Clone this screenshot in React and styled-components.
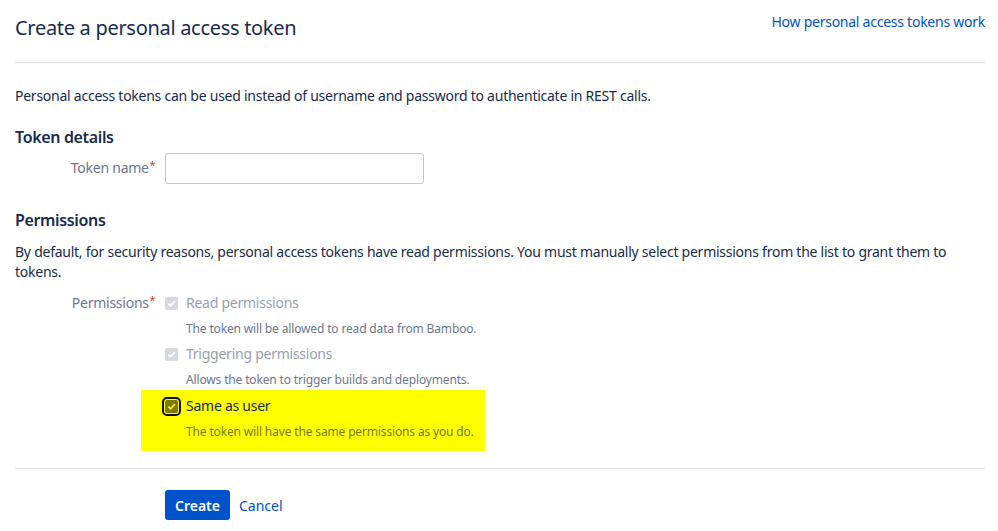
import React from "react";
import styled, { createGlobalStyle } from "styled-components";

const GlobalStyle = createGlobalStyle`
  html, body {
    margin: 0;
    padding: 0;
    background: #fff;
  }
  body {
    font-family: "Segoe UI", "Noto Sans", sans-serif;
    font-size: 14px;
    letter-spacing: -0.25px;
    color: #172b4d;
  }
`;

const Page = styled.div`
  padding: 0 13px 0 15px;
  width: 970px;
`;

const Header = styled.div`
  display: flex;
  justify-content: space-between;
  align-items: flex-start;
  padding-top: 12px;
  height: 50px;
  border-bottom: 1px solid #dfe1e6;
`;

const Title = styled.h1`
  margin: 0;
  font-size: 20px;
  font-weight: 400;
  line-height: 32px;
  letter-spacing: -0.3px;
  color: #172b4d;
`;

const Link = styled.a`
  color: #0052cc;
  text-decoration: none;
  font-size: 14px;
  line-height: 20px;
`;

const Text = styled.p`
  margin: ${(p) => p.$margin || "0"};
  font-size: 14px;
  line-height: 20px;
  color: #172b4d;
`;

const SectionTitle = styled.h2`
  margin: ${(p) => p.$margin || "0"};
  font-size: 16px;
  font-weight: 600;
  line-height: 22px;
  letter-spacing: -0.35px;
  color: #172b4d;
`;

const FieldRow = styled.div`
  display: grid;
  grid-template-columns: 140px 1fr;
  column-gap: 10px;
  margin: ${(p) => p.$margin || "0"};
`;

const Label = styled.label`
  text-align: right;
  color: #6b778c;
  font-size: 14px;
  line-height: 20px;
  padding-top: ${(p) => p.$top || "0"};
`;

const Required = styled.span`
  color: #de350b;
  font-size: 10px;
  vertical-align: top;
  position: relative;
  top: -3px;
  margin-left: 1px;
`;

const Input = styled.input`
  box-sizing: border-box;
  width: 259px;
  height: 31px;
  border: 1px solid #c1c7d0;
  border-radius: 3px;
  font: inherit;
  padding: 0 8px;
`;

const Options = styled.div`
  display: flex;
  flex-direction: column;
`;

const Option = styled.div`
  display: grid;
  grid-template-columns: 13px 1fr;
  column-gap: 8px;
  align-items: center;
  padding: ${(p) => (p.$highlight ? "6px 0 11px 24px" : "0")};
  margin: ${(p) => (p.$highlight ? "-5px 0 0 -24px" : "0 0 7px")};
  width: ${(p) => (p.$highlight ? "320px" : "auto")};
  background: ${(p) => (p.$highlight ? "#ffff00" : "transparent")};
`;

const OptionLabel = styled.span`
  font-size: 14px;
  line-height: 20px;
  color: ${(p) => (p.$disabled ? "#97a0af" : "#172b4d")};
`;

const OptionHint = styled.span`
  grid-column: 2;
  font-size: 12px;
  line-height: 16px;
  letter-spacing: -0.15px;
  margin-top: 8px;
  color: ${(p) => (p.$highlight ? "#7a7a00" : "#6b778c")};
`;

const Box = styled.span`
  box-sizing: border-box;
  width: 13px;
  height: 13px;
  border-radius: 2px;
  display: flex;
  align-items: center;
  justify-content: center;
  background: ${(p) => (p.$disabled ? "#d5d8de" : "#7f7a00")};
  outline: ${(p) => (p.$disabled ? "none" : "2px solid #111")};
  outline-offset: 1px;
`;

const Divider = styled.hr`
  border: 0;
  border-top: 1px solid #dfe1e6;
  margin: ${(p) => p.$margin || "0"};
`;

const Actions = styled.div`
  display: flex;
  align-items: center;
  gap: 9px;
  padding-left: 150px;
`;

const PrimaryButton = styled.button`
  height: 30px;
  padding: 0 10px;
  border: 0;
  border-radius: 3px;
  background: #0052cc;
  color: #fff;
  font: inherit;
  font-weight: 600;
`;

const LinkButton = styled.button`
  border: 0;
  background: none;
  padding: 0;
  color: #0052cc;
  font: inherit;
`;

const Check = ({ disabled }) => (
  <Box $disabled={disabled}>
    <svg width="9" height="9" viewBox="0 0 10 10">
      <path
        d="M1.5 5.2 L4 7.6 L8.6 2.4"
        fill="none"
        stroke={disabled ? "#fff" : "#ffff00"}
        strokeWidth="1.8"
      />
    </svg>
  </Box>
);

const permissions = [
  {
    id: "read",
    label: "Read permissions",
    hint: "The token will be allowed to read data from Bamboo.",
    disabled: true,
  },
  {
    id: "trigger",
    label: "Triggering permissions",
    hint: "Allows the token to trigger builds and deployments.",
    disabled: true,
  },
  {
    id: "user",
    label: "Same as user",
    hint: "The token will have the same permissions as you do.",
    disabled: false,
    highlight: true,
  },
];

export default function App() {
  return (
    <>
      <GlobalStyle />
      <Page>
        <Header>
          <Title>Create a personal access token</Title>
          <Link href="#">How personal access tokens work</Link>
        </Header>
        <Text $margin="23px 0 0">
          Personal access tokens can be used instead of username and password to authenticate in REST calls.
        </Text>
        <SectionTitle $margin="20px 0 0">Token details</SectionTitle>
        <FieldRow $margin="5px 0 0">
          <Label $top="5px">
            Token name<Required>*</Required>
          </Label>
          <Input type="text" />
        </FieldRow>
        <SectionTitle $margin="25px 0 0">Permissions</SectionTitle>
        <Text $margin="11px 0 0">
          By default, for security reasons, personal access tokens have read permissions. You must manually select
          permissions from the list to grant them to tokens.
        </Text>
        <FieldRow $margin="11px 0 0">
          <Label>
            Permissions<Required>*</Required>
          </Label>
          <Options>
            {permissions.map((p) => (
              <Option key={p.id} $highlight={p.highlight}>
                <Check disabled={p.disabled} />
                <OptionLabel $disabled={p.disabled}>{p.label}</OptionLabel>
                <OptionHint $highlight={p.highlight}>{p.hint}</OptionHint>
              </Option>
            ))}
          </Options>
        </FieldRow>
        <Divider $margin="17px 0 21px" />
        <Actions>
          <PrimaryButton>Create</PrimaryButton>
          <LinkButton>Cancel</LinkButton>
        </Actions>
      </Page>
    </>
  );
}
